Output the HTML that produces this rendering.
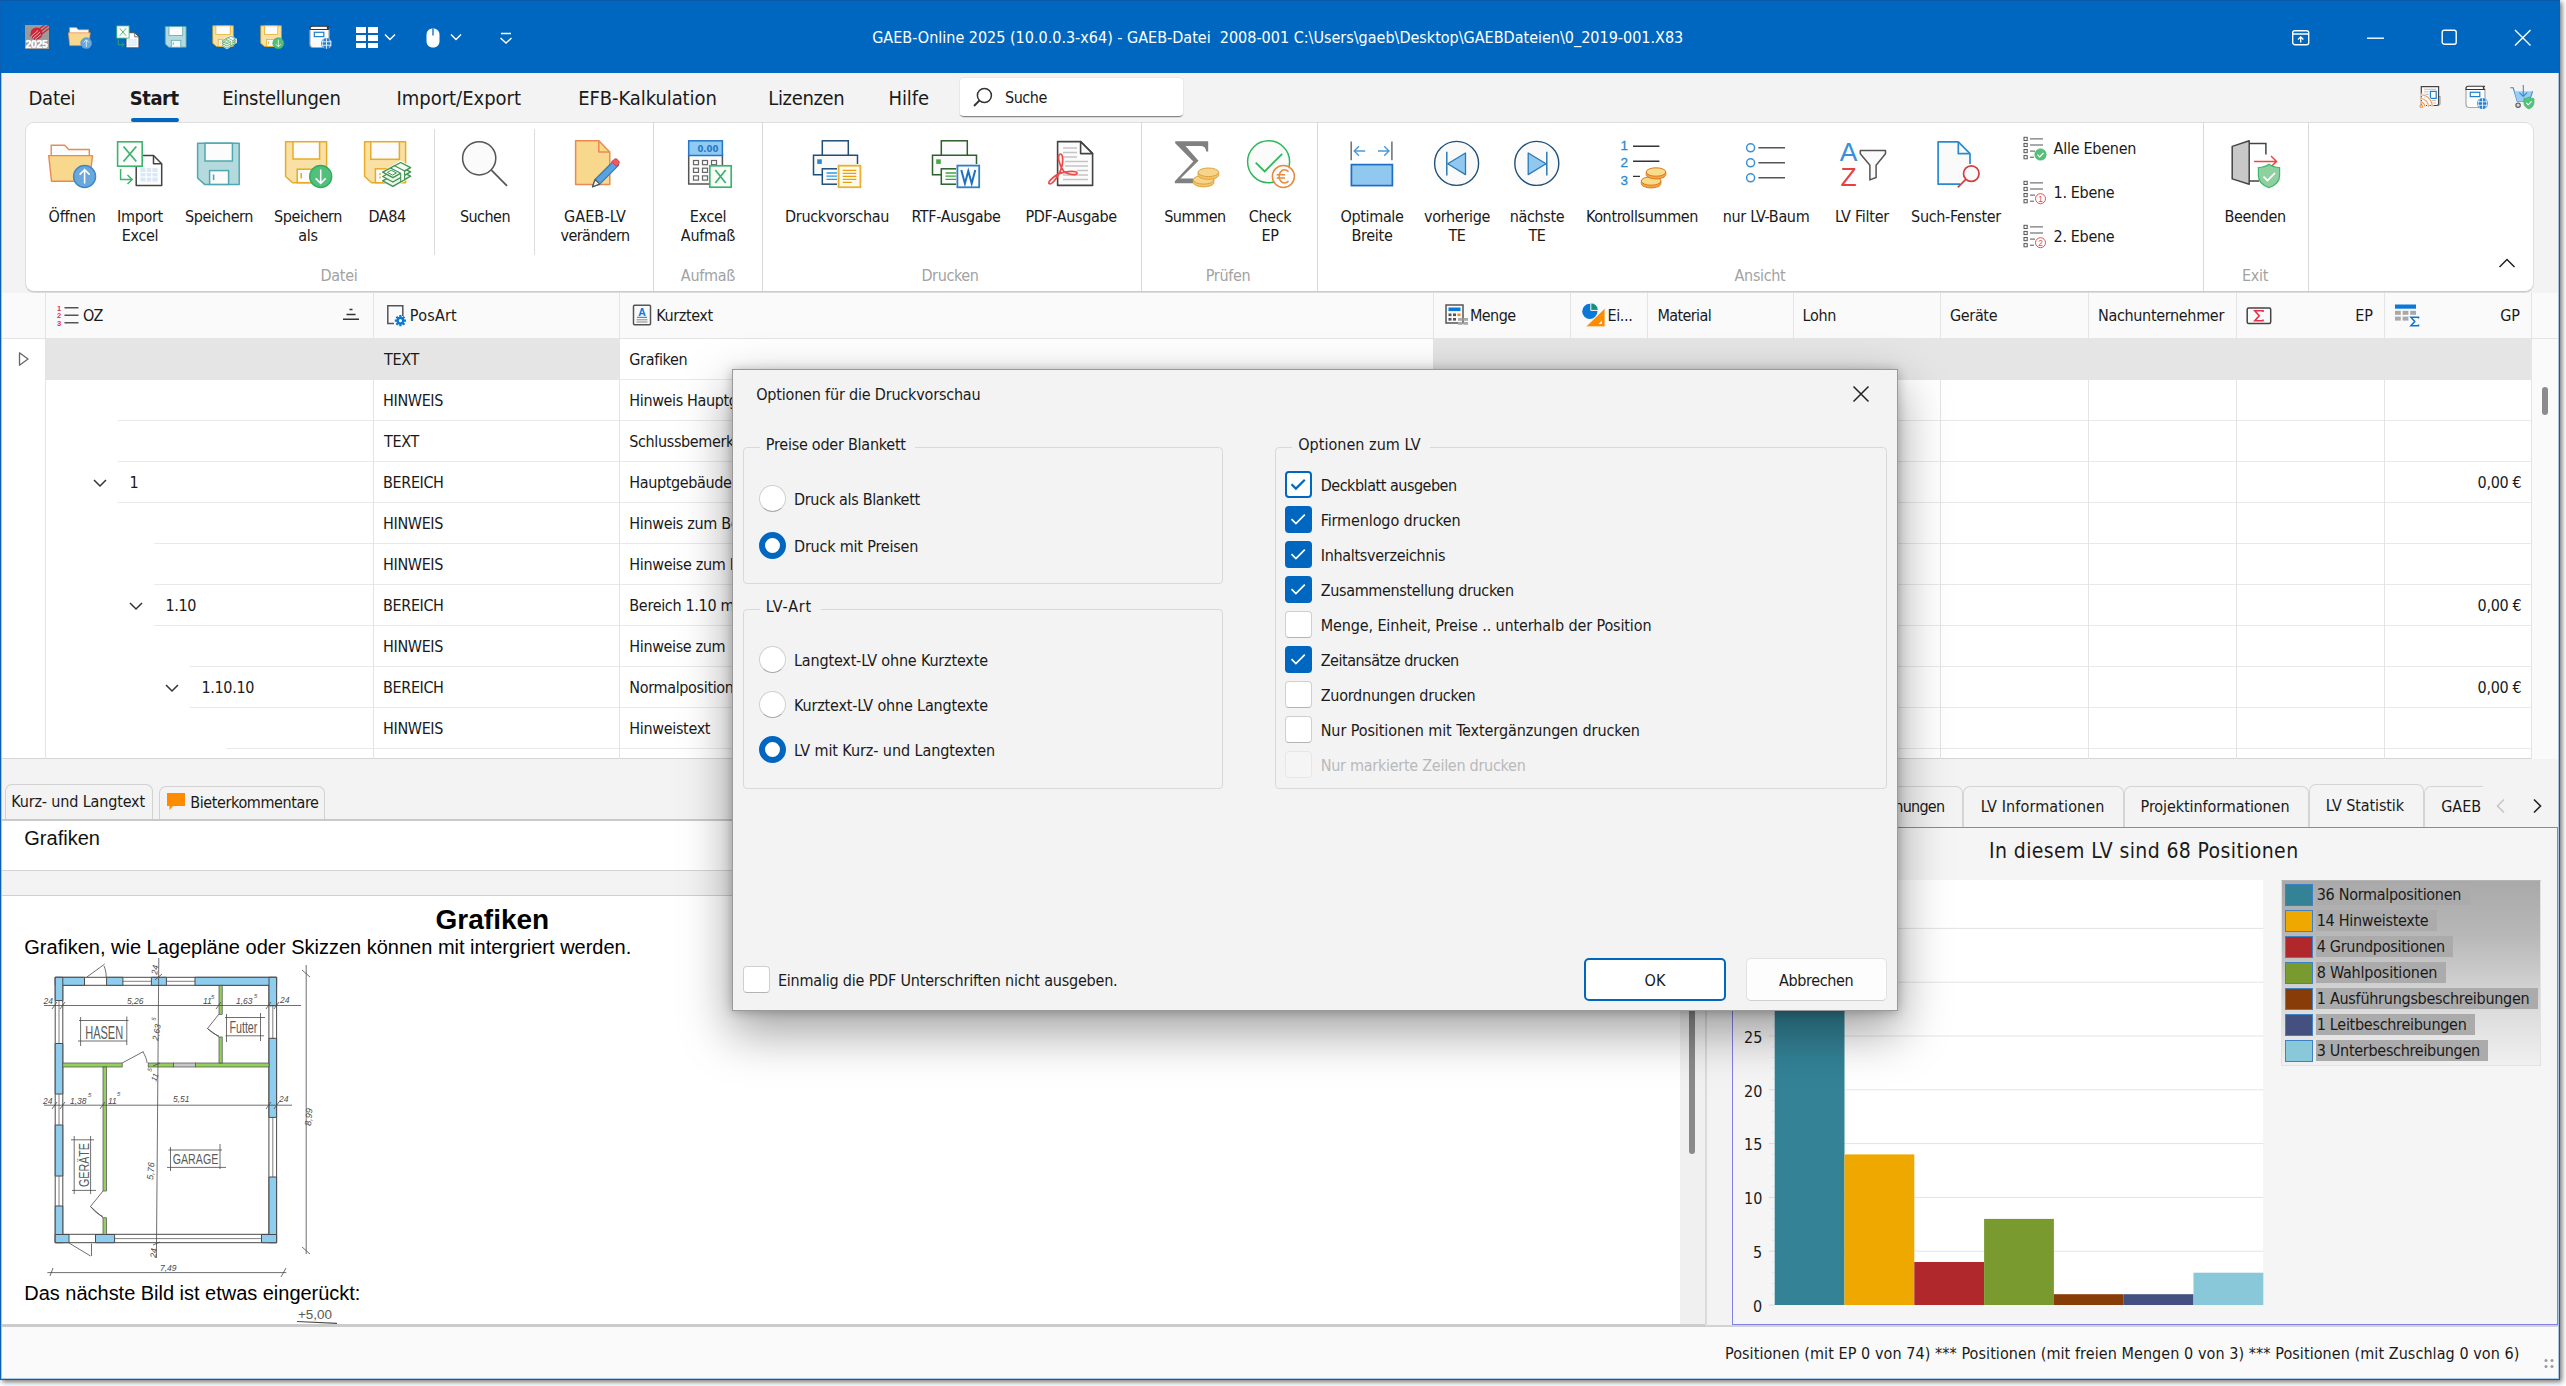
<!DOCTYPE html>
<html lang="de">
<head>
<meta charset="utf-8">
<title>GAEB-Online 2025</title>
<style>
*{box-sizing:border-box;margin:0;padding:0}
html,body{width:2566px;height:1386px;overflow:hidden;background:#fff}
body{font-family:"DejaVu Sans Condensed","Liberation Sans",sans-serif;color:#1a1a1a;position:relative}
.abs{position:absolute}
#win{position:absolute;left:0;top:0;width:2560px;height:1380px;background:#f3f3f3;box-shadow:2px 2px 5px rgba(0,0,0,.55);overflow:hidden}
#winb{position:absolute;left:0;top:0;width:2560px;height:1380px;border:1px solid #0a5fb6;border-top:none;pointer-events:none;z-index:50}
#winb i{position:absolute;left:0;top:73px;right:0;bottom:0;border:1px solid rgba(10,100,190,.32);border-top:none}
svg{display:block;overflow:visible}
.t{position:absolute;white-space:pre;line-height:1}
</style>
</head>
<body>
<div id="win">

<div id="title" class="abs" style="left:0;top:0;width:2560px;height:73px;background:#0067c0;border-top:1px solid #0a5aa8">
<div class="abs" style="left:25px;top:24px;width:24px;height:24px;background:#9a9a9a;overflow:hidden">
<svg width="24" height="24" viewBox="0 0 24 24"><circle cx="11.5" cy="8.5" r="6" fill="#c8283a"/><path d="M7 13L24 0M9 15L24 3.5M5 11L22 -2" stroke="#c8283a" stroke-width="1.3"/><path d="M6 11.5l7-6M8 13l7-6M10 14.5l6-5" stroke="#f0d0d0" stroke-width=".8"/></svg>
<span class="t" style="left:.5px;top:14px;font-family:'Liberation Sans',sans-serif;font-weight:bold;font-size:10.500px;color:#fff;letter-spacing:-.35px;text-shadow:0 0 1px #fff">2025</span></div>
<div class="abs" style="left:68px;top:24px"><svg width="24" height="24" viewBox="0 0 48 48"><path d="M3.2 16V5.2h13.5l4 4.3h20.6V16" fill="#fdfdfd" stroke="#ea8a52" stroke-width="1.4" stroke-linejoin="round"/>
<path d="M0.7 15.6h43.8l-3 25.6H3.5z" fill="#f8d88c" stroke="#ea8a52" stroke-width="1.4" stroke-linejoin="round"/>
<circle cx="36.6" cy="36.5" r="11" fill="#6aa8dc" stroke="#3d88cc" stroke-width="1.4"/>
<path d="M36.6 43.5V30M31.6 34.6l5-5 5 5" fill="none" stroke="#fff" stroke-width="1.5"/></svg></div>
<div class="abs" style="left:116px;top:24px"><svg width="24" height="24" viewBox="0 0 48 48"><path d="M20.2 15.5h17.3l8.2 8.3v21.7H20.2z" fill="#fdfdfd" stroke="#444" stroke-width="1.5" stroke-linejoin="round"/>
<path d="M37.5 15.5v8.3h8.2" fill="none" stroke="#444" stroke-width="1.5" stroke-linejoin="round"/>
<rect x="24.5" y="28" width="17" height="13.5" fill="#d8e8f8"/>
<path d="M24.5 32.5h17M24.5 37h17M30.2 28v13.5M35.8 28v13.5" stroke="#fff" stroke-width="1.2"/>
<rect x="1.6" y="1.8" width="24.6" height="24.4" fill="#fdfdfd" stroke="#3bb56c" stroke-width="1.6"/>
<path d="M7.5 6.5l12.8 15M20.3 6.5l-12.8 15" stroke="#3bb56c" stroke-width="1.8" fill="none"/>
<path d="M4.6 29v10.5h11M11.5 35l4.6 4.5-4.6 4.5" fill="none" stroke="#3bb56c" stroke-width="1.5"/></svg></div>
<div class="abs" style="left:164px;top:24px"><svg width="24" height="24" viewBox="0 0 48 48"><path d="M2.6 3.2h41.6v41.2H9.6L2.6 38z" fill="#b4dade" stroke="#4fa8b0" stroke-width="1.5" stroke-linejoin="round"/>
<rect x="10" y="3.2" width="27.4" height="17.8" fill="#fcfcfc" stroke="#4fa8b0" stroke-width="1.5"/>
<rect x="14.6" y="30.6" width="19" height="13.8" fill="#fcfcfc" stroke="#4fa8b0" stroke-width="1.5"/>
<path d="M18.6 34.5v5.6" stroke="#4fa8b0" stroke-width="1.6"/></svg></div>
<div class="abs" style="left:212px;top:24px"><svg width="24" height="24" viewBox="0 0 48 48"><path d="M1.6 1.7h41v41H8.6L1.6 36.5z" fill="#f9e0a4" stroke="#e9ab24" stroke-width="1.5" stroke-linejoin="round"/>
<rect x="7.8" y="1.7" width="28.6" height="17.6" fill="#fcfcfc" stroke="#e9ab24" stroke-width="1.5"/>
<rect x="12.4" y="28.8" width="18.6" height="13.9" fill="#fcfcfc" stroke="#e9ab24" stroke-width="1.5"/>
<path d="M17.2 33v5.6" stroke="#e9ab24" stroke-width="1.6" stroke-dasharray="2 1.5"/>
<polygon points="17.7,32.2 37.7,20.5 49.6,27.6 49.6,36.2 29.9,48.3 17.7,40.8" fill="#fdfdfd"/>
<g stroke="#3f9350" stroke-width="1.4" stroke-linejoin="round">
<polygon points="19.7,40.8 37.7,31.1 47.6,36.2 29.9,46.3" fill="#eef7ec"/>
<polygon points="19.7,36.5 37.7,26.8 47.6,31.9 29.9,42" fill="#eef7ec"/>
<polygon points="19.7,32.2 37.7,22.5 47.6,27.6 29.9,37.7" fill="#f4faf2"/>
<polygon points="27.6,27.9 31.6,25.8 41.6,31 41.6,39.6 37.7,41.9 37.7,33.3" fill="#fdfdfd" stroke-width="1.1"/>
<polygon points="24.4,32.4 28.3,30.2 33.4,32.9 29.5,35.1" fill="none" stroke-width="1"/>
</g></svg></div>
<div class="abs" style="left:260px;top:24px"><svg width="24" height="24" viewBox="0 0 48 48"><path d="M1.6 1.7h41v41H8.6L1.6 36.5z" fill="#f9e0a4" stroke="#e9ab24" stroke-width="1.5" stroke-linejoin="round"/>
<rect x="9" y="1.7" width="26.6" height="17.3" fill="#fcfcfc" stroke="#e9ab24" stroke-width="1.5"/>
<rect x="13.2" y="29.2" width="18" height="13.5" fill="#fcfcfc" stroke="#e9ab24" stroke-width="1.5"/>
<path d="M17.2 33v5.6" stroke="#e9ab24" stroke-width="1.6"/>
<circle cx="36.7" cy="36.5" r="11" fill="#52c07c" stroke="#2fae62" stroke-width="1.4"/>
<path d="M36.7 29.5V43M31.7 38.4l5 5 5-5" fill="none" stroke="#fff" stroke-width="1.5"/></svg></div>
<div class="abs" style="left:308px;top:24px"><svg width="24" height="24" viewBox="0 0 48 48"><path d="M4 9h38v30a6 6 0 0 1-6 6H10a6 6 0 0 1-6-6z" fill="#fcfcfc" stroke="#a8a8a8" stroke-width="2.4"/>
<path d="M4 9V6.5a4 4 0 0 1 4-4h33l-2.5 3.2L41 9z" fill="#fcfcfc" stroke="#333" stroke-width="2.4" stroke-linejoin="round"/>
<rect x="12.6" y="14.6" width="19" height="8.6" fill="#fcfcfc" stroke="#1f7fd0" stroke-width="2.4"/>
<circle cx="37" cy="37" r="11" fill="#2a80d0"/>
<path d="M37 26.5v21M31 29c-3.5 5-3.5 11 0 16M43 29c3.5 5 3.5 11 0 16M27 33.5h20M27 40.5h20" fill="none" stroke="#e8f2fc" stroke-width="1.8"/></svg></div>
<svg class="abs" style="left:355px;top:25px" width="24" height="24" viewBox="0 0 24 24"><g fill="#fff"><rect x="1" y="1" width="10" height="6"/><rect x="13" y="1" width="10" height="6"/><rect x="1" y="9" width="10" height="6"/><rect x="13" y="9" width="10" height="6"/><rect x="1" y="17" width="10" height="5"/><rect x="13" y="17" width="10" height="5"/></g></svg>
<svg class="abs" style="left:384px;top:32px" width="12" height="8" viewBox="0 0 12 8"><path d="M1 1.5l5 5 5-5" fill="none" stroke="#fff" stroke-width="1.4"/></svg>
<svg class="abs" style="left:424px;top:26px" width="18" height="22" viewBox="0 0 18 22"><path d="M9 1.5c-4 0-6.5 2.5-6.5 6.5v6c0 4 2.5 6.5 6.5 6.5s6.5-2.5 6.5-6.5V8c0-4-2.5-6.5-6.5-6.5z" fill="#fff"/><path d="M9 1.5v7" stroke="#0067c0" stroke-width="1.3"/></svg>
<svg class="abs" style="left:450px;top:32px" width="12" height="8" viewBox="0 0 12 8"><path d="M1 1.5l5 5 5-5" fill="none" stroke="#fff" stroke-width="1.4"/></svg>
<svg class="abs" style="left:499px;top:30px" width="14" height="14" viewBox="0 0 14 14"><path d="M2 2.5h10M1.5 7l5.5 5 5.5-5" fill="none" stroke="#fff" stroke-width="1.4"/></svg>
<span class="t" style="left:872.2px;top:29px;font-size:16px;color:#fff;">GAEB-Online 2025 (10.0.0.3-x64) - GAEB-Datei  2008-001 C:\Users\gaeb\Desktop\GAEBDateien\0_2019-001.X83</span>
<svg class="abs" style="left:2291px;top:28px" width="20" height="18" viewBox="0 0 20 18"><rect x="1.7" y="1.7" width="16" height="14" rx="2" fill="none" stroke="#fff" stroke-width="1.4"/><path d="M1.7 5h16M9.7 13.5V8M7 10.5l2.7-2.7 2.7 2.7" fill="none" stroke="#fff" stroke-width="1.3"/></svg>
<svg class="abs" style="left:2367px;top:36px" width="17" height="3" viewBox="0 0 17 3"><path d="M0 1.2h17" stroke="#fff" stroke-width="1.4"/></svg>
<svg class="abs" style="left:2441px;top:28px" width="17" height="17" viewBox="0 0 17 17"><rect x="1.2" y="1.2" width="14" height="14" rx="2" fill="none" stroke="#fff" stroke-width="1.4"/></svg>
<svg class="abs" style="left:2514px;top:28px" width="18" height="18" viewBox="0 0 18 18"><path d="M1 1l15.5 15.5M16.5 1L1 16.5" stroke="#fff" stroke-width="1.4"/></svg>
</div>

<div id="tabs" class="abs" style="left:0;top:73px;width:2560px;height:49px;background:#f3f3f3"></div>
<div class="abs" style="left:131px;top:118px;width:48px;height:4px;border-radius:2px;background:#0067c0"></div>
<div class="abs" style="left:959px;top:77px;width:225px;height:40px;border-radius:5px;background:#fff;border:1px solid #e8e8e8;border-bottom:1px solid #868686;box-shadow:0 1px 0 rgba(0,0,0,.10)"></div>
<svg class="abs" style="left:972px;top:86px" width="22" height="22" viewBox="0 0 22 22"><circle cx="12.4" cy="9.5" r="7" fill="none" stroke="#333" stroke-width="1.5"/><path d="M7.4 14.5L2 20" stroke="#333" stroke-width="1.8"/></svg>
<span class="t" style="left:28.5px;top:88px;font-size:20px;letter-spacing:-0.24px;">Datei</span>
<span class="t" style="left:129.8px;top:88px;font-size:20px;letter-spacing:-0.46px;font-weight:700;">Start</span>
<span class="t" style="left:222.2px;top:88px;font-size:20px;letter-spacing:-0.28px;">Einstellungen</span>
<span class="t" style="left:396.4px;top:88px;font-size:20px;">Import/Export</span>
<span class="t" style="left:578.2px;top:88px;font-size:20px;letter-spacing:-0.08px;">EFB-Kalkulation</span>
<span class="t" style="left:768.3px;top:88px;font-size:20px;letter-spacing:-0.35px;">Lizenzen</span>
<span class="t" style="left:888.6px;top:88px;font-size:20px;letter-spacing:-0.13px;">Hilfe</span>
<span class="t" style="left:1005.0px;top:90px;font-size:16px;letter-spacing:-0.47px;">Suche</span>
<div class="abs" style="left:2418px;top:85px"><svg width="24" height="24" viewBox="0 0 24 24"><path d="M18.5 11.5h3.5v7.2a1.6 1.6 0 0 1-3.2 0" fill="#fcfcfc" stroke="#9a9a9a" stroke-width="1.1"/>
<path d="M3.3 20V1.6h17.3V18.8a1.7 1.7 0 0 1-1.7 1.7H8" fill="#fcfcfc" stroke="#444" stroke-width="1.2"/>
<path d="M6 4.2h12M6 6.8h4.5M6 9.4h4.5M6 12h4.5M13 15.5h5M13 18h5" stroke="#c0c0c0" stroke-width="1.1"/>
<rect x="12.4" y="6.4" width="5.8" height="7" fill="#fcfcfc" stroke="#1f7fd0" stroke-width="1.2"/>
<g fill="none" stroke="#f5f5f5" stroke-width="2.6"><path d="M2.5 9.8a11.7 11.7 0 0 1 11.7 11.7M2.5 13.5a8 8 0 0 1 8 8M2.5 17.2a4.3 4.3 0 0 1 4.3 4.3"/></g>
<g fill="none" stroke="#f09a50" stroke-width="1.1"><path d="M2.5 9.8a11.7 11.7 0 0 1 11.7 11.7M2.5 13.5a8 8 0 0 1 8 8M2.5 17.2a4.3 4.3 0 0 1 4.3 4.3"/><circle cx="3.3" cy="21.2" r="1.3"/></g></svg></div>
<div class="abs" style="left:2464px;top:85px"><svg width="24" height="24" viewBox="0 0 48 48"><path d="M4 9h38v30a6 6 0 0 1-6 6H10a6 6 0 0 1-6-6z" fill="#fcfcfc" stroke="#a8a8a8" stroke-width="2.4"/>
<path d="M4 9V6.5a4 4 0 0 1 4-4h33l-2.5 3.2L41 9z" fill="#fcfcfc" stroke="#333" stroke-width="2.4" stroke-linejoin="round"/>
<rect x="12.6" y="14.6" width="19" height="8.6" fill="#fcfcfc" stroke="#1f7fd0" stroke-width="2.4"/>
<circle cx="37" cy="37" r="11" fill="#2a80d0"/>
<path d="M37 26.5v21M31 29c-3.5 5-3.5 11 0 16M43 29c3.5 5 3.5 11 0 16M27 33.5h20M27 40.5h20" fill="none" stroke="#e8f2fc" stroke-width="1.8"/></svg></div>
<div class="abs" style="left:2510px;top:85px"><svg width="24" height="24" viewBox="0 0 24 24"><path d="M0.3 2.8h2.9L7.2 16.2h12.5" fill="none" stroke="#3a88d4" stroke-width="1.1"/>
<path d="M4.4 6.3h18.2l-3.3 10H7.3z" fill="#9acdf2"/>
<path d="M22.6 6.3l-3.3 10" stroke="#3a88d4" stroke-width="1.1" fill="none"/>
<path d="M13.3 0v11.3M9.4 7.6l3.9 3.9 3.9-3.9" fill="none" stroke="#3a88d4" stroke-width="1.1"/>
<circle cx="8.1" cy="20.2" r="2.2" fill="#d8d8d8" stroke="#555" stroke-width="1.1"/>
<path d="M18.9 12c-1.4 1-3.1 1.5-5 1.5v4c0 3.2 2 5.2 5 6.4 3-1.2 5-3.2 5-6.4v-4c-1.9 0-3.6-.5-5-1.5z" fill="#52c47a" stroke="#34b062" stroke-width=".7"/>
<path d="M16.3 17.9l1.9 1.9 3.4-3.4" fill="none" stroke="#fff" stroke-width="1.1"/></svg></div>

<div id="ribbon" class="abs" style="left:25px;top:122px;width:2509px;height:170px;background:#fff;border:1px solid #dedede;border-bottom:1px solid #cbcbcb;border-radius:9px;box-shadow:0 1px 0 #dcdcdc"></div>
<div class="abs" style="left:48px;top:140px"><svg width="48" height="48" viewBox="0 0 48 48"><path d="M3.2 16V5.2h13.5l4 4.3h20.6V16" fill="#fdfdfd" stroke="#ea8a52" stroke-width="1.4" stroke-linejoin="round"/>
<path d="M0.7 15.6h43.8l-3 25.6H3.5z" fill="#f8d88c" stroke="#ea8a52" stroke-width="1.4" stroke-linejoin="round"/>
<circle cx="36.6" cy="36.5" r="11" fill="#6aa8dc" stroke="#3d88cc" stroke-width="1.4"/>
<path d="M36.6 43.5V30M31.6 34.6l5-5 5 5" fill="none" stroke="#fff" stroke-width="1.5"/></svg></div>
<div class="abs" style="left:116px;top:140px"><svg width="48" height="48" viewBox="0 0 48 48"><path d="M20.2 15.5h17.3l8.2 8.3v21.7H20.2z" fill="#fdfdfd" stroke="#444" stroke-width="1.5" stroke-linejoin="round"/>
<path d="M37.5 15.5v8.3h8.2" fill="none" stroke="#444" stroke-width="1.5" stroke-linejoin="round"/>
<rect x="24.5" y="28" width="17" height="13.5" fill="#d8e8f8"/>
<path d="M24.5 32.5h17M24.5 37h17M30.2 28v13.5M35.8 28v13.5" stroke="#fff" stroke-width="1.2"/>
<rect x="1.6" y="1.8" width="24.6" height="24.4" fill="#fdfdfd" stroke="#3bb56c" stroke-width="1.6"/>
<path d="M7.5 6.5l12.8 15M20.3 6.5l-12.8 15" stroke="#3bb56c" stroke-width="1.8" fill="none"/>
<path d="M4.6 29v10.5h11M11.5 35l4.6 4.5-4.6 4.5" fill="none" stroke="#3bb56c" stroke-width="1.5"/></svg></div>
<div class="abs" style="left:195px;top:140px"><svg width="48" height="48" viewBox="0 0 48 48"><path d="M2.6 3.2h41.6v41.2H9.6L2.6 38z" fill="#b4dade" stroke="#4fa8b0" stroke-width="1.5" stroke-linejoin="round"/>
<rect x="10" y="3.2" width="27.4" height="17.8" fill="#fcfcfc" stroke="#4fa8b0" stroke-width="1.5"/>
<rect x="14.6" y="30.6" width="19" height="13.8" fill="#fcfcfc" stroke="#4fa8b0" stroke-width="1.5"/>
<path d="M18.6 34.5v5.6" stroke="#4fa8b0" stroke-width="1.6"/></svg></div>
<div class="abs" style="left:284px;top:140px"><svg width="48" height="48" viewBox="0 0 48 48"><path d="M1.6 1.7h41v41H8.6L1.6 36.5z" fill="#f9e0a4" stroke="#e9ab24" stroke-width="1.5" stroke-linejoin="round"/>
<rect x="9" y="1.7" width="26.6" height="17.3" fill="#fcfcfc" stroke="#e9ab24" stroke-width="1.5"/>
<rect x="13.2" y="29.2" width="18" height="13.5" fill="#fcfcfc" stroke="#e9ab24" stroke-width="1.5"/>
<path d="M17.2 33v5.6" stroke="#e9ab24" stroke-width="1.6"/>
<circle cx="36.7" cy="36.5" r="11" fill="#52c07c" stroke="#2fae62" stroke-width="1.4"/>
<path d="M36.7 29.5V43M31.7 38.4l5 5 5-5" fill="none" stroke="#fff" stroke-width="1.5"/></svg></div>
<div class="abs" style="left:363px;top:140px"><svg width="48" height="48" viewBox="0 0 48 48"><path d="M1.6 1.7h41v41H8.6L1.6 36.5z" fill="#f9e0a4" stroke="#e9ab24" stroke-width="1.5" stroke-linejoin="round"/>
<rect x="7.8" y="1.7" width="28.6" height="17.6" fill="#fcfcfc" stroke="#e9ab24" stroke-width="1.5"/>
<rect x="12.4" y="28.8" width="18.6" height="13.9" fill="#fcfcfc" stroke="#e9ab24" stroke-width="1.5"/>
<path d="M17.2 33v5.6" stroke="#e9ab24" stroke-width="1.6" stroke-dasharray="2 1.5"/>
<polygon points="17.7,32.2 37.7,20.5 49.6,27.6 49.6,36.2 29.9,48.3 17.7,40.8" fill="#fdfdfd"/>
<g stroke="#3f9350" stroke-width="1.4" stroke-linejoin="round">
<polygon points="19.7,40.8 37.7,31.1 47.6,36.2 29.9,46.3" fill="#eef7ec"/>
<polygon points="19.7,36.5 37.7,26.8 47.6,31.9 29.9,42" fill="#eef7ec"/>
<polygon points="19.7,32.2 37.7,22.5 47.6,27.6 29.9,37.7" fill="#f4faf2"/>
<polygon points="27.6,27.9 31.6,25.8 41.6,31 41.6,39.6 37.7,41.9 37.7,33.3" fill="#fdfdfd" stroke-width="1.1"/>
<polygon points="24.4,32.4 28.3,30.2 33.4,32.9 29.5,35.1" fill="none" stroke-width="1"/>
</g></svg></div>
<div class="abs" style="left:461px;top:140px"><svg width="48" height="48" viewBox="0 0 48 48"><circle cx="18.2" cy="18.3" r="16.6" fill="#fbfbfb" stroke="#555" stroke-width="1.5"/>
<path d="M30.4 30.2L46 45.8" stroke="#555" stroke-width="1.7"/></svg></div>
<div class="abs" style="left:571px;top:140px"><svg width="48" height="48" viewBox="0 0 48 48"><path d="M4.6 0.8h23.2l11 11.2v32.4H4.6z" fill="#f8d88c" stroke="#ea8a52" stroke-width="1.5" stroke-linejoin="round"/>
<path d="M27.8 0.8v11.2h11" fill="none" stroke="#ea8a52" stroke-width="1.5" stroke-linejoin="round"/>
<path d="M21.5 46.8l2.6-7.3 19-19 4.6 4.6-19 19z" fill="#5aa2e0" stroke="#2f7cc4" stroke-width="1.3" stroke-linejoin="round"/>
<path d="M43.1 20.5l2.1-2.1c1-1 2.6-1 3.5 0l1.1 1.1c1 1 1 2.5 0 3.5l-2.1 2.1z" fill="#ee5a64" stroke="#d43c48" stroke-width="1" transform="translate(-2.3 1.2)"/>
<path d="M21.5 46.8l2.6-7.3 4.6 4.6z" fill="#f4f4f4" stroke="#555" stroke-width="1.2" stroke-linejoin="round"/></svg></div>
<div class="abs" style="left:684px;top:140px"><svg width="48" height="48" viewBox="0 0 48 48"><rect x="4.7" y="14.5" width="33.7" height="29.5" fill="#fcfcfc" stroke="#555" stroke-width="1.5"/>
<rect x="4.7" y="0.8" width="33.7" height="14.7" fill="#8ecaf2" stroke="#2676c6" stroke-width="1.5"/>
<text x="34.5" y="11.8" text-anchor="end" font-family="'DejaVu Sans Condensed','Liberation Sans',sans-serif" font-weight="bold" font-size="9.5" fill="#2676c6">0.00</text>
<g fill="none" stroke="#666" stroke-width="1.2">
<rect x="9.5" y="20.5" width="5" height="4.2"/><rect x="18.5" y="20.5" width="5" height="4.2"/><rect x="27.5" y="20.5" width="5" height="4.2"/>
<rect x="9.5" y="28.2" width="5" height="4.2"/><rect x="18.5" y="28.2" width="5" height="4.2"/>
<rect x="9.5" y="35.9" width="5" height="4.2"/><rect x="18.5" y="35.9" width="5" height="4.2"/>
</g>
<rect x="25.8" y="25.8" width="21.4" height="21.4" fill="#fcfcfc" stroke="#3bb56c" stroke-width="1.7"/>
<path d="M31.3 30l10.4 13M41.7 30l-10.4 13" stroke="#3bb56c" stroke-width="1.8" fill="none"/></svg></div>
<div class="abs" style="left:813px;top:140px"><svg width="48" height="48" viewBox="0 0 48 48"><rect x="9.3" y="0.8" width="26" height="15" fill="#fcfcfc" stroke="#1f4e79" stroke-width="1.5"/>
<path d="M0.5 15.3h44v19.5H0.5z" fill="#fafafa" stroke="#1f4e79" stroke-width="1.5"/>
<rect x="4.2" y="19.3" width="4.6" height="4.6" fill="#2f86d0"/>
<rect x="9.3" y="28.8" width="20" height="15.4" fill="#fcfcfc" stroke="#1f4e79" stroke-width="1.5"/>
<path d="M13.5 33h11M13.5 36.2h11M13.5 39.4h11" stroke="#2f9ae0" stroke-width="1.3"/>
<rect x="24" y="24" width="24" height="24" fill="#fafafa"/>
<rect x="25.6" y="25.7" width="21.8" height="21.5" fill="#fffaea" stroke="#ebb030" stroke-width="1.8"/>
<path d="M29.7 30.3h13.6M29.7 33.3h13.6M29.7 36.3h13.6M29.7 39.3h13.6M29.7 42.3h9" stroke="#e8a010" stroke-width="1.3"/></svg></div>
<div class="abs" style="left:932px;top:140px"><svg width="48" height="48" viewBox="0 0 48 48"><rect x="9.3" y="0.8" width="26" height="15" fill="#fcfcfc" stroke="#2d5f2d" stroke-width="1.5"/>
<path d="M0.5 15.3h44v19.5H0.5z" fill="#fafafa" stroke="#2d5f2d" stroke-width="1.5"/>
<rect x="4.2" y="19.3" width="4.6" height="4.6" fill="#4aa84a"/>
<rect x="9.3" y="28.8" width="20" height="15.4" fill="#fcfcfc" stroke="#2d5f2d" stroke-width="1.5"/>
<path d="M13.5 33h11M13.5 36.2h11M13.5 39.4h11" stroke="#3aa83a" stroke-width="1.3"/>
<rect x="24" y="24" width="24" height="24" fill="#fafafa"/>
<rect x="25.4" y="25.6" width="21.8" height="21.7" fill="#fcfcfc" stroke="#2f7ec8" stroke-width="1.8"/>
<path d="M29.3 30l3.6 13.5L36.3 31l3.4 12.5L43.3 30" fill="none" stroke="#1f6fc0" stroke-width="2" stroke-linejoin="miter"/></svg></div>
<div class="abs" style="left:1047px;top:140px"><svg width="48" height="48" viewBox="0 0 48 48"><path d="M10.6 1.6h23l12 12v31.8H10.6z" fill="#fcfcfc" stroke="#444" stroke-width="1.6" stroke-linejoin="round"/>
<path d="M33.6 1.6v12h12z" fill="#fcfcfc" stroke="#444" stroke-width="1.6" stroke-linejoin="round"/>
<path d="M16 8h14M16 12.5h14M16 17h14M18 21.5h23M18 26h23M30 30.5h11M16 35h25M16 39.5h25" stroke="#c4c4c4" stroke-width="1.4"/>
<path d="M13.6 14c-1.8 0-2.6 2.6-1.8 6.4 .8 3.8 2.6 8 5.6 11.8 -3.6 .6-9.4 3.2-13.6 7.4 -2 2-2.6 3.8-1.4 4.2 1.6 .6 4.2-1.6 7.2-6 2.6-4 5.6-10.4 6-15.2 .4-5.4-.4-8.6-2-8.6z M17.4 32.2c4.6-.9 8.8-1.2 11.4-.4 1.8 .6 1.8 2.2-.2 2.6 -2.6 .5-7-.2-11.2-2.2z" fill="none" stroke="#ee4a4a" stroke-width="1.7" stroke-linejoin="round"/></svg></div>
<div class="abs" style="left:1171px;top:140px"><svg width="48" height="48" viewBox="0 0 48 48"><path d="M4.2 1.3H37.2V11.5H35.2C34.8 7.5 33 6 29 6H14.5L27.5 20.8 9.5 38.5H22V43.2H3.8V41.3L22.3 21.5 4.2 3.2z" fill="#808080"/>
<g stroke="#e2a23a" stroke-width="1">
<path d="M22.3 39.8v2.6c0 2.5 4.6 4.4 10.3 4.4s10.3-1.9 10.3-4.4v-2.6z" fill="#f2c46a"/>
<ellipse cx="32.6" cy="39.8" rx="10.3" ry="4.3" fill="#f6d48a"/>
<path d="M27.1 32.3v2.6c0 2.5 4.6 4.4 10.3 4.4s10.3-1.9 10.3-4.4v-2.6z" fill="#f2c46a"/>
<ellipse cx="37.4" cy="32.3" rx="10.3" ry="4.3" fill="#f6d48a"/>
</g></svg></div>
<div class="abs" style="left:1246px;top:140px"><svg width="48" height="48" viewBox="0 0 48 48"><circle cx="22.6" cy="21.8" r="21" fill="#fbfbfb" stroke="#2eb85c" stroke-width="1.5"/>
<path d="M9.7 22.7l9 8.7 17.5-17.5" fill="none" stroke="#2eb85c" stroke-width="1.8"/>
<circle cx="37.4" cy="36.4" r="11" fill="#fdfdfd" stroke="#e88a3c" stroke-width="1.5"/>
<path d="M42.5 31.8c-1.1-1.3-2.5-2-4.1-2-3 0-5.3 2.9-5.3 6.6s2.3 6.6 5.3 6.6c1.6 0 3-.7 4.1-2M30.6 34.8h8.4M30.6 38h8.4" fill="none" stroke="#e88a3c" stroke-width="1.5"/></svg></div>
<div class="abs" style="left:1348px;top:140px"><svg width="48" height="48" viewBox="0 0 48 48"><path d="M3.2 1.5v18.8M43.9 1.5v18.8" stroke="#777" stroke-width="1.6"/>
<path d="M6.2 11h11M11 6.2L6.2 11l4.8 4.8M41 11H30M36.2 6.2L41 11l-4.8 4.8" fill="none" stroke="#4a9ad8" stroke-width="1.4"/>
<rect x="3.4" y="24.6" width="41" height="21" fill="#90c8f0" stroke="#1f6fc0" stroke-width="1.7"/></svg></div>
<div class="abs" style="left:1433px;top:140px"><svg width="48" height="48" viewBox="0 0 48 48"><circle cx="23.6" cy="23.4" r="22" fill="#fafafa" stroke="#1f5078" stroke-width="1.4"/>
<path d="M32.5 13v21.6L14.7 23.8z" fill="#90c8f0" stroke="#2a7ab8" stroke-width="1.3" stroke-linejoin="round"/>
<path d="M13.8 11.8v23.7" stroke="#2a7ab8" stroke-width="1.5"/></svg></div>
<div class="abs" style="left:1513px;top:140px"><svg width="48" height="48" viewBox="0 0 48 48"><circle cx="23.8" cy="23.4" r="22" fill="#fafafa" stroke="#1f5078" stroke-width="1.4"/>
<path d="M15.2 13v21.6L33 23.8z" fill="#90c8f0" stroke="#2a7ab8" stroke-width="1.3" stroke-linejoin="round"/>
<path d="M33.8 11.8v23.7" stroke="#2a7ab8" stroke-width="1.5"/></svg></div>
<div class="abs" style="left:1618px;top:140px"><svg width="48" height="48" viewBox="0 0 48 48"><g font-family="'Liberation Sans',sans-serif" font-size="13.5" fill="#2a8ad0" text-anchor="middle" stroke="#2a8ad0" stroke-width=".3">
<text x="6.2" y="10">1</text><text x="6.2" y="26.5">2</text><text x="6.2" y="44.7">3</text></g>
<path d="M15 6.2h26.4M15 21.2h26.4M15 36.4h7" stroke="#333" stroke-width="1.4"/>
<g stroke="#e07820" stroke-width="1">
<path d="M23.3 41v2.6c0 2.4 4.4 4.3 9.8 4.3s9.8-1.9 9.8-4.3V41z" fill="#f0a640"/>
<ellipse cx="33.1" cy="41" rx="9.8" ry="4.2" fill="#f8dc8c"/>
<path d="M28.2 32v2.6c0 2.4 4.4 4.3 9.8 4.3s9.8-1.9 9.8-4.3V32z" fill="#f0a640"/>
<ellipse cx="38" cy="32" rx="9.8" ry="4.2" fill="#f8dc8c"/>
</g></svg></div>
<div class="abs" style="left:1742px;top:140px"><svg width="48" height="48" viewBox="0 0 48 48"><g fill="none" stroke="#3a90d8" stroke-width="1.5"><circle cx="8.6" cy="7.8" r="4"/><circle cx="8.6" cy="22.8" r="4"/><circle cx="8.6" cy="37.8" r="4"/></g>
<path d="M16.4 7.8H43M16.4 22.8H43M16.4 37.8H43" stroke="#555" stroke-width="1.6"/></svg></div>
<div class="abs" style="left:1838px;top:140px"><svg width="48" height="48" viewBox="0 0 48 48"><g font-family="'Liberation Sans',sans-serif" font-size="26.5" text-anchor="middle">
<text x="10.5" y="21.4" fill="#3a90d8">A</text><text x="10.5" y="45.6" fill="#e84040">Z</text></g>
<path d="M22.3 10.6h25.2v3.2L38.1 25.2v12.3l-6.2 2.4V25.2L22.3 13.8z" fill="#fafafa" stroke="#555" stroke-width="1.5" stroke-linejoin="round"/></svg></div>
<div class="abs" style="left:1932px;top:140px"><svg width="48" height="48" viewBox="0 0 48 48"><path d="M6.1 1.9h20.2L38 13.7v30.5H6.1z" fill="#fafafa" stroke="#2a8ad0" stroke-width="1.7" stroke-linejoin="round"/>
<path d="M26.3 1.9v11.8H38" fill="none" stroke="#2a8ad0" stroke-width="1.7" stroke-linejoin="round"/>
<rect x="28" y="24" width="14" height="22" fill="#fafafa"/>
<circle cx="39.3" cy="33.6" r="7.8" fill="#fafafa" stroke="#d04040" stroke-width="1.7"/>
<path d="M33.8 39.3L25.8 47.3" stroke="#d04040" stroke-width="1.7"/></svg></div>
<div class="abs" style="left:2231px;top:140px"><svg width="48" height="48" viewBox="0 0 48 48"><path d="M18.2 3.5h16.7v11M18.2 40.9h10" fill="none" stroke="#444" stroke-width="1.5"/>
<path d="M1.2 6.4L18.2 0.7v43.6L1.2 38.9z" fill="#c8c8c8" stroke="#444" stroke-width="1.5" stroke-linejoin="round"/>
<path d="M23.1 21.4h22.5M40 16l5.6 5.4-5.6 5.4" fill="none" stroke="#ee4444" stroke-width="1.5"/>
<path d="M38 24.3c-3 2.2-6.5 3.2-10.6 3.2v8c0 6 4.4 10 10.6 12.2 6.2-2.2 10.6-6.2 10.6-12.2v-8c-4.1 0-7.6-1-10.6-3.2z" fill="#8ed0a0" stroke="#3cb868" stroke-width="1.2"/>
<path d="M32.5 36.6l4 3.9 7.5-7.5" fill="none" stroke="#fff" stroke-width="1.7"/></svg></div>
<div class="abs" style="left:434px;top:129px;width:1px;height:126px;background:#dcdcdc"></div>
<div class="abs" style="left:534px;top:129px;width:1px;height:126px;background:#dcdcdc"></div>
<div class="abs" style="left:653px;top:123px;width:1px;height:168px;background:#d8d8d8"></div>
<div class="abs" style="left:762px;top:123px;width:1px;height:168px;background:#d8d8d8"></div>
<div class="abs" style="left:1141px;top:123px;width:1px;height:168px;background:#d8d8d8"></div>
<div class="abs" style="left:1317px;top:123px;width:1px;height:168px;background:#d8d8d8"></div>
<div class="abs" style="left:2203px;top:123px;width:1px;height:168px;background:#d8d8d8"></div>
<div class="abs" style="left:2308px;top:123px;width:1px;height:168px;background:#d8d8d8"></div>
<svg class="abs" style="left:2023px;top:136px" width="24" height="24" viewBox="0 0 24 24"><g fill="#fcfcfc" stroke="#555" stroke-width="1"><rect x="1" y="1.3" width="3.2" height="3.2"/><rect x="1" y="7.4" width="3.2" height="3.2"/><rect x="1" y="13.5" width="3.2" height="3.2"/><rect x="1" y="19.6" width="3.2" height="3.2"/></g><path d="M7 2.9h13M7 9h13M7 15.1h5M7 21.2h4" stroke="#555" stroke-width="1"/><circle cx="17.5" cy="18.5" r="5.6" fill="#58c078" stroke="#3cae60" stroke-width=".8"/><path d="M14.5 18.6l2.2 2.2 3.8-3.8" fill="none" stroke="#fff" stroke-width="1.2"/></svg>
<svg class="abs" style="left:2023px;top:180px" width="24" height="24" viewBox="0 0 24 24"><g fill="#fcfcfc" stroke="#555" stroke-width="1"><rect x="1" y="1.3" width="3.2" height="3.2"/><rect x="1" y="7.4" width="3.2" height="3.2"/><rect x="1" y="13.5" width="3.2" height="3.2"/><rect x="1" y="19.6" width="3.2" height="3.2"/></g><path d="M7 2.9h13M7 9h13M7 15.1h5M7 21.2h4" stroke="#555" stroke-width="1"/><circle cx="17.5" cy="18.7" r="5" fill="#fff" stroke="#ee4a4a" stroke-width="1"/><text x="17.5" y="21.7" text-anchor="middle" font-family="'Liberation Sans',sans-serif" font-size="8.5" fill="#ee4a4a">1</text></svg>
<svg class="abs" style="left:2023px;top:224px" width="24" height="24" viewBox="0 0 24 24"><g fill="#fcfcfc" stroke="#555" stroke-width="1"><rect x="1" y="1.3" width="3.2" height="3.2"/><rect x="1" y="7.4" width="3.2" height="3.2"/><rect x="1" y="13.5" width="3.2" height="3.2"/><rect x="1" y="19.6" width="3.2" height="3.2"/></g><path d="M7 2.9h13M7 9h13M7 15.1h5M7 21.2h4" stroke="#555" stroke-width="1"/><circle cx="17.5" cy="18.7" r="5" fill="#fff" stroke="#ee4a4a" stroke-width="1"/><text x="17.5" y="21.7" text-anchor="middle" font-family="'Liberation Sans',sans-serif" font-size="8.5" fill="#ee4a4a">2</text></svg>
<svg class="abs" style="left:2498px;top:257px" width="18" height="12" viewBox="0 0 18 12"><path d="M1.5 10l7.5-7.5 7.5 7.5" fill="none" stroke="#222" stroke-width="1.5"/></svg>
<span class="t" style="left:48.6px;top:209px;font-size:16px;letter-spacing:-0.26px;">Öffnen</span>
<span class="t" style="left:117.1px;top:209px;font-size:16px;letter-spacing:-0.34px;">Import</span>
<span class="t" style="left:121.8px;top:228px;font-size:16px;letter-spacing:-0.33px;">Excel</span>
<span class="t" style="left:185.0px;top:209px;font-size:16px;letter-spacing:-0.42px;">Speichern</span>
<span class="t" style="left:274.0px;top:209px;font-size:16px;letter-spacing:-0.42px;">Speichern</span>
<span class="t" style="left:298.3px;top:228px;font-size:16px;letter-spacing:-0.29px;">als</span>
<span class="t" style="left:368.4px;top:209px;font-size:16px;letter-spacing:-0.42px;">DA84</span>
<span class="t" style="left:459.9px;top:209px;font-size:16px;letter-spacing:-0.53px;">Suchen</span>
<span class="t" style="left:563.9px;top:209px;font-size:16px;letter-spacing:0.13px;">GAEB-LV</span>
<span class="t" style="left:560.4px;top:228px;font-size:16px;letter-spacing:-0.53px;">verändern</span>
<span class="t" style="left:689.8px;top:209px;font-size:16px;letter-spacing:-0.33px;">Excel</span>
<span class="t" style="left:680.8px;top:228px;font-size:16px;letter-spacing:-0.26px;">Aufmaß</span>
<span class="t" style="left:785.0px;top:209px;font-size:16px;letter-spacing:-0.31px;">Druckvorschau</span>
<span class="t" style="left:911.4px;top:209px;font-size:16px;letter-spacing:-0.36px;">RTF-Ausgabe</span>
<span class="t" style="left:1025.4px;top:209px;font-size:16px;letter-spacing:-0.37px;">PDF-Ausgabe</span>
<span class="t" style="left:1164.2px;top:209px;font-size:16px;letter-spacing:-0.46px;">Summen</span>
<span class="t" style="left:1248.8px;top:209px;font-size:16px;letter-spacing:-0.38px;">Check</span>
<span class="t" style="left:1261.5px;top:228px;font-size:16px;letter-spacing:-0.38px;">EP</span>
<span class="t" style="left:1340.5px;top:209px;font-size:16px;letter-spacing:-0.35px;">Optimale</span>
<span class="t" style="left:1351.5px;top:228px;font-size:16px;letter-spacing:-0.31px;">Breite</span>
<span class="t" style="left:1424.1px;top:209px;font-size:16px;letter-spacing:-0.33px;">vorherige</span>
<span class="t" style="left:1448.4px;top:228px;font-size:16px;letter-spacing:-0.38px;">TE</span>
<span class="t" style="left:1509.7px;top:209px;font-size:16px;letter-spacing:-0.35px;">nächste</span>
<span class="t" style="left:1528.4px;top:228px;font-size:16px;letter-spacing:-0.38px;">TE</span>
<span class="t" style="left:1585.9px;top:209px;font-size:16px;letter-spacing:-0.36px;">Kontrollsummen</span>
<span class="t" style="left:1722.8px;top:209px;font-size:16px;letter-spacing:-0.35px;">nur LV-Baum</span>
<span class="t" style="left:1835.1px;top:209px;font-size:16px;letter-spacing:-0.27px;">LV Filter</span>
<span class="t" style="left:1911.1px;top:209px;font-size:16px;letter-spacing:-0.34px;">Such-Fenster</span>
<span class="t" style="left:2224.5px;top:209px;font-size:16px;letter-spacing:-0.39px;">Beenden</span>
<span class="t" style="left:320.6px;top:268px;font-size:16px;letter-spacing:-0.33px;color:#a2a2a2;">Datei</span>
<span class="t" style="left:680.8px;top:268px;font-size:16px;letter-spacing:-0.26px;color:#a2a2a2;">Aufmaß</span>
<span class="t" style="left:921.4px;top:268px;font-size:16px;letter-spacing:-0.37px;color:#a2a2a2;">Drucken</span>
<span class="t" style="left:1205.8px;top:268px;font-size:16px;letter-spacing:-0.33px;color:#a2a2a2;">Prüfen</span>
<span class="t" style="left:1734.6px;top:268px;font-size:16px;letter-spacing:-0.33px;color:#a2a2a2;">Ansicht</span>
<span class="t" style="left:2242.0px;top:268px;font-size:16px;letter-spacing:-0.29px;color:#a2a2a2;">Exit</span>
<span class="t" style="left:2053.6px;top:141px;font-size:16px;letter-spacing:-0.27px;">Alle Ebenen</span>
<span class="t" style="left:2053.6px;top:185px;font-size:16px;letter-spacing:-0.34px;">1. Ebene</span>
<span class="t" style="left:2053.6px;top:229px;font-size:16px;letter-spacing:-0.34px;">2. Ebene</span>

<div id="grid" class="abs" style="left:2px;top:293px;width:2556px;height:466px;background:#fff;border-bottom:1px solid #d6d6d6;overflow:hidden"></div>
<div class="abs" style="left:2px;top:293px;width:2556px;height:46px;background:#fafafa;border-bottom:1px solid #e4e4e4"></div>
<div class="abs" style="left:2532px;top:339px;width:26px;height:420px;background:#fafafa"></div>
<div class="abs" style="left:46px;top:338px;width:574px;height:42px;background:#e5e5e5"></div>
<div class="abs" style="left:1433px;top:338px;width:1099px;height:42px;background:#e5e5e5"></div>
<div class="abs" style="left:620px;top:379.1px;width:813px;height:1px;background:#e9e9e9"></div>
<div class="abs" style="left:118px;top:420.1px;width:2414px;height:1px;background:#e9e9e9"></div>
<div class="abs" style="left:118px;top:461.1px;width:2414px;height:1px;background:#e9e9e9"></div>
<div class="abs" style="left:118px;top:502.1px;width:2414px;height:1px;background:#e9e9e9"></div>
<div class="abs" style="left:154px;top:543.1px;width:2378px;height:1px;background:#e9e9e9"></div>
<div class="abs" style="left:154px;top:584.1px;width:2378px;height:1px;background:#e9e9e9"></div>
<div class="abs" style="left:154px;top:625.1px;width:2378px;height:1px;background:#e9e9e9"></div>
<div class="abs" style="left:190px;top:666.1px;width:2342px;height:1px;background:#e9e9e9"></div>
<div class="abs" style="left:190px;top:707.1px;width:2342px;height:1px;background:#e9e9e9"></div>
<div class="abs" style="left:226px;top:748.1px;width:2306px;height:1px;background:#e9e9e9"></div>
<div class="abs" style="left:45.0px;top:293px;width:1px;height:466px;background:#e4e4e4"></div>
<div class="abs" style="left:372.8px;top:293px;width:1px;height:466px;background:#e4e4e4"></div>
<div class="abs" style="left:619.4px;top:293px;width:1px;height:466px;background:#e4e4e4"></div>
<div class="abs" style="left:1432.7px;top:293px;width:1px;height:466px;background:#e4e4e4"></div>
<div class="abs" style="left:1570.0px;top:293px;width:1px;height:466px;background:#e4e4e4"></div>
<div class="abs" style="left:1647.2px;top:293px;width:1px;height:466px;background:#e4e4e4"></div>
<div class="abs" style="left:1793.1px;top:293px;width:1px;height:466px;background:#e4e4e4"></div>
<div class="abs" style="left:1940.0px;top:293px;width:1px;height:466px;background:#e4e4e4"></div>
<div class="abs" style="left:2088.1px;top:293px;width:1px;height:466px;background:#e4e4e4"></div>
<div class="abs" style="left:2236.3px;top:293px;width:1px;height:466px;background:#e4e4e4"></div>
<div class="abs" style="left:2384.0px;top:293px;width:1px;height:466px;background:#e4e4e4"></div>
<div class="abs" style="left:2531.3px;top:293px;width:1px;height:466px;background:#e4e4e4"></div>
<div class="abs" style="left:46px;top:338px;width:574px;height:42px;background:#e5e5e5"></div>
<div class="abs" style="left:1434px;top:338px;width:1098px;height:42px;background:#e5e5e5"></div>
<svg class="abs" style="left:56px;top:304px" width="24" height="23" viewBox="0 0 24 23"><g font-family="'Liberation Sans',sans-serif" font-weight="bold" font-size="7.5" fill="#e8304a"><text x="1" y="7">1</text><text x="1" y="14.3">2</text><text x="1" y="21.6">3</text></g><path d="M8.5 3.8h14M8.5 11.3h14M8.5 18.8h14" stroke="#555" stroke-width="1.5"/></svg>
<svg class="abs" style="left:342px;top:308px" width="18" height="13" viewBox="0 0 18 13"><path d="M7.5 1.5h3M4.5 6.5h9M1 11.3h16" stroke="#333" stroke-width="1.4"/></svg>
<svg class="abs" style="left:386px;top:304px" width="24" height="24" viewBox="0 0 24 24"><path d="M16.8 12V1.8H1.8V19.5H8" fill="none" stroke="#555" stroke-width="1.5"/><g transform="translate(14.4 16.7)" fill="#0a78d8"><circle r="3.9"/><g stroke="#0a78d8" stroke-width="2.3"><path d="M0-5.6V5.6M-5.6 0H5.6M-4-4L4 4M-4 4L4-4"/></g><circle r="1.6" fill="#fafafa"/></g></svg>
<svg class="abs" style="left:632px;top:304px" width="20" height="22" viewBox="0 0 20 22"><rect x="1.5" y="1.2" width="17" height="19.6" rx="1" fill="#fafafa" stroke="#555" stroke-width="1.5"/><text x="10" y="12" text-anchor="middle" font-family="'Liberation Sans',sans-serif" font-weight="bold" font-size="10.5" fill="#0a78d8">A</text><path d="M5 13.3h10" stroke="#0a78d8" stroke-width="1"/><path d="M4.5 15.8h11M4.5 18h11" stroke="#888" stroke-width="1"/></svg>
<svg class="abs" style="left:1445px;top:304px" width="24" height="22" viewBox="0 0 24 22"><rect x="1" y="1" width="17" height="18" fill="#fafafa" stroke="#555" stroke-width="1.5"/><rect x="3.5" y="3.5" width="12" height="3.6" fill="#0a78d8"/><g fill="#555"><rect x="3.5" y="9.5" width="3" height="2.6"/><rect x="8" y="9.5" width="3" height="2.6"/><rect x="3.5" y="14" width="3" height="2.6"/><rect x="8" y="14" width="3" height="2.6"/></g><rect x="12.5" y="9.5" width="3" height="2.6" fill="#ff8c00"/><g fill="#aaa"><rect x="13" y="14" width="4.5" height="2.8"/><rect x="18.5" y="14" width="4.5" height="2.8"/><rect x="13" y="18" width="4.5" height="2.8"/><rect x="18.5" y="18" width="4.5" height="2.8"/></g></svg>
<svg class="abs" style="left:1581px;top:302px" width="26" height="26" viewBox="0 0 26 26"><circle cx="8.8" cy="9.4" r="7.6" fill="#0a78d8"/><path d="M9.8 8.4V0.8a7.6 7.6 0 0 1 7.6 7.6z" fill="#14907c" stroke="#fafafa" stroke-width="1"/><path d="M4.6 24.8H24V6z" fill="#ff8c00" stroke="#fafafa" stroke-width=".8"/><path d="M17.5 22h3.5v-3.5z" fill="#fafafa"/></svg>
<svg class="abs" style="left:2246px;top:307px" width="26" height="18" viewBox="0 0 26 18"><rect x="1.2" y="1" width="23.5" height="15.6" rx="1.5" fill="#fafafa" stroke="#444" stroke-width="1.5"/><path d="M17 5V3.8H8.8L13.2 8.8 8.8 13.8H17V12.6" fill="none" stroke="#e83048" stroke-width="1.6"/></svg>
<svg class="abs" style="left:2394px;top:304px" width="26" height="24" viewBox="0 0 26 24"><rect x="1" y="0.5" width="21" height="4.2" fill="#0a78d8"/><g fill="#a8a8a8"><rect x="1" y="6.8" width="5.8" height="4"/><rect x="8.6" y="6.8" width="5.8" height="4"/><rect x="16.2" y="6.8" width="5.8" height="4"/><rect x="1" y="12.6" width="5.8" height="4"/><rect x="8.6" y="12.6" width="5.8" height="4"/></g><path d="M24.5 14.5V13.3H17l3.7 4.2-3.7 4.2h7.5v-1.2" fill="none" stroke="#0a78d8" stroke-width="1.6"/></svg>
<svg class="abs" style="left:18px;top:351px" width="12" height="16" viewBox="0 0 12 16"><path d="M1.5 1.8L10 8l-8.5 6.2z" fill="none" stroke="#666" stroke-width="1.3" stroke-linejoin="round"/></svg>
<svg class="abs" style="left:92px;top:477.6px" width="16" height="10" viewBox="0 0 16 10"><path d="M2 2l6 6 6-6" fill="none" stroke="#333" stroke-width="1.5"/></svg>
<svg class="abs" style="left:128px;top:600.6px" width="16" height="10" viewBox="0 0 16 10"><path d="M2 2l6 6 6-6" fill="none" stroke="#333" stroke-width="1.5"/></svg>
<svg class="abs" style="left:164px;top:682.6px" width="16" height="10" viewBox="0 0 16 10"><path d="M2 2l6 6 6-6" fill="none" stroke="#333" stroke-width="1.5"/></svg>
<div class="abs" style="left:2542px;top:387px;width:6px;height:28px;border-radius:3px;background:#8c8c8c"></div>
<span class="t" style="left:82.9px;top:308px;font-size:16px;letter-spacing:-0.69px;">OZ</span>
<span class="t" style="left:409.8px;top:308px;font-size:16px;letter-spacing:0.23px;">PosArt</span>
<span class="t" style="left:656.3px;top:308px;font-size:16px;letter-spacing:-0.40px;">Kurztext</span>
<span class="t" style="left:1470.0px;top:308px;font-size:16px;letter-spacing:-0.58px;">Menge</span>
<span class="t" style="left:1607.5px;top:308px;font-size:16px;letter-spacing:-0.38px;">Ei...</span>
<span class="t" style="left:1657.4px;top:308px;font-size:16px;letter-spacing:-0.59px;">Material</span>
<span class="t" style="left:1802.6px;top:308px;font-size:16px;letter-spacing:-0.37px;">Lohn</span>
<span class="t" style="left:1950.0px;top:308px;font-size:16px;letter-spacing:-0.35px;">Geräte</span>
<span class="t" style="left:2098.0px;top:308px;font-size:16px;letter-spacing:-0.33px;">Nachunternehmer</span>
<span class="t" style="left:2355.2px;top:308px;font-size:16px;">EP</span>
<span class="t" style="left:2500.2px;top:308px;font-size:16px;">GP</span>
<span class="t" style="left:384.1px;top:352px;font-size:16px;letter-spacing:-0.39px;">TEXT</span>
<span class="t" style="left:629.3px;top:352px;font-size:16px;letter-spacing:-0.33px;">Grafiken</span>
<span class="t" style="left:383.1px;top:393px;font-size:16px;letter-spacing:-0.38px;">HINWEIS</span>
<span class="t" style="left:629.3px;top:393px;font-size:16px;letter-spacing:-0.36px;">Hinweis Hauptgebäude</span>
<span class="t" style="left:384.1px;top:434px;font-size:16px;letter-spacing:-0.39px;">TEXT</span>
<span class="t" style="left:629.3px;top:434px;font-size:16px;letter-spacing:-0.37px;">Schlussbemerkung</span>
<span class="t" style="left:129.5px;top:475px;font-size:16px;">1</span>
<span class="t" style="left:383.1px;top:475px;font-size:16px;letter-spacing:-0.39px;">BEREICH</span>
<span class="t" style="left:629.3px;top:475px;font-size:16px;letter-spacing:-0.38px;">Hauptgebäude</span>
<span class="t" style="left:2477.6px;top:475px;font-size:16px;letter-spacing:-0.33px;">0,00 €</span>
<span class="t" style="left:383.1px;top:516px;font-size:16px;letter-spacing:-0.38px;">HINWEIS</span>
<span class="t" style="left:629.3px;top:516px;font-size:16px;letter-spacing:-0.34px;">Hinweis zum Bereich</span>
<span class="t" style="left:383.1px;top:557px;font-size:16px;letter-spacing:-0.38px;">HINWEIS</span>
<span class="t" style="left:629.3px;top:557px;font-size:16px;letter-spacing:-0.34px;">Hinweise zum Bereich</span>
<span class="t" style="left:165.5px;top:598px;font-size:16px;letter-spacing:-0.34px;">1.10</span>
<span class="t" style="left:383.1px;top:598px;font-size:16px;letter-spacing:-0.39px;">BEREICH</span>
<span class="t" style="left:629.3px;top:598px;font-size:16px;letter-spacing:-0.32px;">Bereich 1.10 mit</span>
<span class="t" style="left:2477.6px;top:598px;font-size:16px;letter-spacing:-0.33px;">0,00 €</span>
<span class="t" style="left:383.1px;top:639px;font-size:16px;letter-spacing:-0.38px;">HINWEIS</span>
<span class="t" style="left:629.3px;top:639px;font-size:16px;letter-spacing:-0.36px;">Hinweise zum</span>
<span class="t" style="left:201.5px;top:680px;font-size:16px;letter-spacing:-0.34px;">1.10.10</span>
<span class="t" style="left:383.1px;top:680px;font-size:16px;letter-spacing:-0.39px;">BEREICH</span>
<span class="t" style="left:629.3px;top:680px;font-size:16px;letter-spacing:-0.34px;">Normalpositionen</span>
<span class="t" style="left:2477.6px;top:680px;font-size:16px;letter-spacing:-0.33px;">0,00 €</span>
<span class="t" style="left:383.1px;top:721px;font-size:16px;letter-spacing:-0.38px;">HINWEIS</span>
<span class="t" style="left:629.3px;top:721px;font-size:16px;letter-spacing:-0.33px;">Hinweistext</span>

<div class="abs" style="left:2px;top:819px;width:1704px;height:2px;background:#c9c9c9"></div>
<div class="abs" style="left:5px;top:784px;width:148px;height:35px;background:#f3f3f3;border:1px solid #d2d2d2;border-bottom:none;border-radius:7px 7px 0 0"></div>
<div class="abs" style="left:159px;top:786px;width:166px;height:33px;background:#f3f3f3;border:1px solid #d2d2d2;border-bottom:none;border-radius:7px 7px 0 0"></div>
<svg class="abs" style="left:166px;top:792px" width="20" height="20" viewBox="0 0 20 20"><path d="M1 1h18v13H7l-3.5 4v-4H1z" fill="#ff8c00"/></svg>
<div class="abs" style="left:2px;top:821px;width:1704px;height:50px;background:#fff;border-bottom:1px solid #d4d4d4"></div>
<div class="abs" style="left:2px;top:895px;width:1678px;height:430px;background:#fff;border-top:1px solid #cfcfcf"></div>
<div class="abs" style="left:1680px;top:896px;width:26px;height:429px;background:#f0f0f0"></div>
<div class="abs" style="left:1689px;top:1008px;width:6px;height:146px;border-radius:3px;background:#8a8a8a"></div>
<div class="abs" style="left:2px;top:1324px;width:1704px;height:3px;background:#cbcbcb"></div>
<div class="abs" style="left:1706px;top:1325px;width:852px;height:2px;background:#d2d2d2"></div>
<div class="abs" style="left:1705px;top:786px;width:2px;height:540px;background:#dadada"></div>
<svg class="abs" style="left:0;top:0" width="360" height="1326" viewBox="0 0 360 1326"><g stroke="#4a4a4a" stroke-width="1" stroke-linejoin="round"><path d="M55.2 977.3H276.6V1242.7H55.2z M62.8 985.3V1234.3H268.9V985.3z" fill="#fff" fill-rule="evenodd"/><rect x="55.2" y="977.3" width="29.3" height="8" fill="#8fcdee"/><rect x="106.6" y="977.3" width="16.3" height="8" fill="#8fcdee"/><rect x="151.4" y="977.3" width="15" height="8" fill="#8fcdee"/><rect x="195" y="977.3" width="81.6" height="8" fill="#8fcdee"/><rect x="55.2" y="977.3" width="7.6" height="23.3" fill="#8fcdee"/><rect x="55.2" y="1043.5" width="7.6" height="50.5" fill="#8fcdee"/><rect x="55.2" y="1125" width="7.6" height="51" fill="#8fcdee"/><rect x="55.2" y="1206" width="7.6" height="36.7" fill="#8fcdee"/><rect x="269" y="977.3" width="7.6" height="28.5" fill="#8fcdee"/><rect x="269" y="1038.3" width="7.6" height="79.1" fill="#8fcdee"/><rect x="269" y="1177" width="7.6" height="65.7" fill="#8fcdee"/><rect x="55.2" y="1234.5" width="13.8" height="8.2" fill="#8fcdee"/><rect x="95.5" y="1234.5" width="19.1" height="8.2" fill="#8fcdee"/><rect x="261.5" y="1234.5" width="15.1" height="8.2" fill="#8fcdee"/></g><g stroke="#4a4a4a" stroke-width=".7" fill="none"><path d="M122.9 981.3H151.4M166.4 981.3H195M59 1000.6V1043.5M59 1094V1125M59 1176V1206M272.8 1005.8V1038.3M272.8 1117.4V1177M114.6 1238.6H261.5"/></g><g stroke="#4a4a4a" stroke-width=".7"><rect x="62.8" y="1063" width="59.4" height="4" fill="#93d15c"/><rect x="148.2" y="1063" width="25.3" height="4" fill="#93d15c"/><rect x="195.6" y="1063" width="73.4" height="4" fill="#93d15c"/><rect x="173.5" y="1063" width="22.1" height="4" fill="#c8c8c8"/><rect x="219" y="985.3" width="3.2" height="29" fill="#93d15c"/><rect x="219" y="1037" width="3.2" height="26" fill="#93d15c"/><rect x="103" y="1067" width="3.4" height="124" fill="#93d15c"/><rect x="103" y="1217.8" width="3.4" height="16.5" fill="#93d15c"/></g><g stroke="#4a4a4a" stroke-width=".8" fill="none"><path d="M44 1005.5H301M158.8 958L156.4 1258M44 1105.2H292M306.2 965V1254M47.4 1272.6H286.3"/><path d="M86.5 977.3L104.7 964M104 966c1.5 3.5 2.2 7 2.2 11M122.2 1063L143.5 1051.5M143 1052c2.2 3.5 3.5 7 4.2 11M219 1014L207.5 1028.5 219 1037M207.5 1028.5c3.5 3.5 7 6 11.5 7.5M103 1191L90.5 1206.5 103 1217.8M90.5 1206.5c3.5 4.5 7.5 8 12.5 10M69 1243L90.5 1256M91.5 1243.5v12.5"/><path d="M52 1009l5-7M60 1009l5-7M266 1009l5-7M274 1009l5-7M155 980l7-6M216 1009l5-7M52 1109l5-7M60 1109l5-7M100 1109l5-7M266 1109l5-7M274 1109l5-7M302 970l8 7M302 1247l8 7M50 1276l3-8M281 1277l5-9M153 1245l7-3M153 1066l7-3"/><path d="M79 1020.5H128.5M80.6 1017V1046M126.8 1016.5V1045M78 1041H127M225 1017.5H265M226.5 1014V1042M260.5 1013V1041M225.5 1035.8H264M168.5 1150H222M170.5 1147V1171M220 1144V1169M167 1167.4H226M74.2 1136V1194M71 1139.8H94M90.6 1136V1194M72 1190.4H96"/></g><g font-family="'Liberation Sans',sans-serif" font-style="italic" fill="#4a4a4a"><text x="43.5" y="1004" font-size="8.5">24</text><text x="127" y="1003.5" font-size="8.5">5,26</text><text x="203" y="1004" font-size="8.5">11</text><text x="211" y="999" font-size="6">5</text><text x="236" y="1004" font-size="8.5">1,63</text><text x="254" y="998" font-size="6">5</text><text x="280" y="1003" font-size="8.5">24</text><text x="157" y="975" font-size="8.5" transform="rotate(-80 157 975)">24</text><text x="158" y="1041" font-size="8.5" transform="rotate(-80 158 1041)">2,63</text><text x="155.5" y="1021" font-size="6" transform="rotate(-80 155.5 1021)">5</text><text x="156" y="1082" font-size="8" transform="rotate(-70 156 1082)">11</text><text x="151" y="1072" font-size="6" transform="rotate(-70 151 1072)">5</text><text x="43" y="1103.5" font-size="8.5">24</text><text x="70" y="1103.5" font-size="8.5">1,38</text><text x="88" y="1097" font-size="6">5</text><text x="108" y="1103.5" font-size="8.5">11</text><text x="117" y="1096" font-size="6">5</text><text x="173" y="1102" font-size="8.5">5,51</text><text x="279" y="1102" font-size="8.5">24</text><text x="311" y="1126" font-size="9" transform="rotate(-85 311 1126)">8,99</text><text x="153" y="1180" font-size="9" transform="rotate(-85 153 1180)">5,76</text><text x="156" y="1258" font-size="8.5" transform="rotate(-85 156 1258)">24</text><text x="160" y="1271" font-size="8.5">7,49</text><text x="85.2" y="1038.6" font-size="19" font-style="normal" lengthAdjust="spacingAndGlyphs" textLength="38" fill="#5a5a5a">HASEN</text><text x="229.4" y="1033" font-size="16.5" font-style="normal" lengthAdjust="spacingAndGlyphs" textLength="28" fill="#5a5a5a">Futter</text><text x="172.7" y="1163.9" font-size="14" font-style="normal" lengthAdjust="spacingAndGlyphs" textLength="45.6" fill="#5a5a5a">GARAGE</text><text x="88.9" y="1187" font-size="15" transform="rotate(-90 88.9 1187)" font-style="normal" lengthAdjust="spacingAndGlyphs" textLength="44" fill="#5a5a5a">GERÄTE</text><text x="298" y="1318.5" font-size="12.5" font-style="normal" fill="#5a5a5a" textLength="34" lengthAdjust="spacingAndGlyphs">+5,00</text></g><path d="M297 1321.5l40 1.8" stroke="#4a4a4a" stroke-width="1.2"/></svg>
<span class="t" style="left:11.2px;top:794px;font-size:16px;letter-spacing:-0.15px;">Kurz- und Langtext</span>
<span class="t" style="left:190.3px;top:795px;font-size:16px;letter-spacing:-0.40px;">Bieterkommentare</span>
<span class="t" style="left:24.3px;top:828px;font-size:20px;font-family:'Liberation Sans',sans-serif;color:#111;">Grafiken</span>
<span class="t" style="left:435.6px;top:906px;font-size:28px;font-family:'Liberation Sans',sans-serif;font-weight:700;color:#000;">Grafiken</span>
<span class="t" style="left:24.3px;top:937px;font-size:20px;font-family:'Liberation Sans',sans-serif;color:#000;">Grafiken, wie Lagepläne oder Skizzen können mit intergriert werden.</span>
<span class="t" style="left:24.3px;top:1283px;font-size:20px;letter-spacing:-0.02px;font-family:'Liberation Sans',sans-serif;color:#000;">Das nächste Bild ist etwas eingerückt:</span>

<div class="abs" style="left:1732px;top:827px;width:826px;height:498px;background:#f5f5f5;border:1px solid #8080e6"></div>
<div class="abs" style="left:1852.0px;top:786px;width:111.2px;height:41px;background:#f3f3f3;border:1px solid #d4d4d4;border-bottom:none;border-radius:7px 7px 0 0;"></div>
<div class="abs" style="left:1963.2px;top:786px;width:160.5px;height:41px;background:#f3f3f3;border:1px solid #d4d4d4;border-bottom:none;border-radius:7px 7px 0 0;"></div>
<div class="abs" style="left:2123.7px;top:786px;width:185.7px;height:41px;background:#f3f3f3;border:1px solid #d4d4d4;border-bottom:none;border-radius:7px 7px 0 0;"></div>
<div class="abs" style="left:2309.4px;top:784px;width:114.6px;height:43px;background:#f4f4f4;border:1px solid #d4d4d4;border-bottom:none;border-radius:7px 7px 0 0"></div>
<div class="abs" style="left:2424.0px;top:786px;width:76.0px;height:41px;background:#f3f3f3;border:1px solid #d4d4d4;border-bottom:none;border-radius:7px 7px 0 0;border-right:none;border-radius:7px 0 0 0;width:58.700px;"></div>
<svg class="abs" style="left:2495px;top:798px" width="12" height="16" viewBox="0 0 12 16"><path d="M9 1.5L2.5 8 9 14.5" fill="none" stroke="#c4c4c4" stroke-width="1.5"/></svg>
<svg class="abs" style="left:2531px;top:798px" width="12" height="16" viewBox="0 0 12 16"><path d="M3 1.5L9.5 8 3 14.5" fill="none" stroke="#222" stroke-width="1.6"/></svg>
<div class="abs" style="left:1774.7px;top:879.6px;width:488.6px;height:425.4px;background:#fff"></div>
<svg class="abs" style="left:0;top:0" width="2560" height="1330" viewBox="0 0 2560 1330"><path d="M1774.7 1251.2H2263.3" stroke="#e4e4e4" stroke-width="1"/><path d="M1774.7 1197.4H2263.3" stroke="#e4e4e4" stroke-width="1"/><path d="M1774.7 1143.6H2263.3" stroke="#e4e4e4" stroke-width="1"/><path d="M1774.7 1089.8H2263.3" stroke="#e4e4e4" stroke-width="1"/><path d="M1774.7 1036H2263.3" stroke="#e4e4e4" stroke-width="1"/><path d="M1774.7 982.2H2263.3" stroke="#e4e4e4" stroke-width="1"/><path d="M1774.7 928.4H2263.3" stroke="#e4e4e4" stroke-width="1"/><path d="M1768.7 1305H1774.7" stroke="#dcdcdc" stroke-width="1"/><path d="M1771.7 1294.2H1774.7" stroke="#e8e8e8" stroke-width="1"/><path d="M1771.7 1283.5H1774.7" stroke="#e8e8e8" stroke-width="1"/><path d="M1771.7 1272.7H1774.7" stroke="#e8e8e8" stroke-width="1"/><path d="M1771.7 1262H1774.7" stroke="#e8e8e8" stroke-width="1"/><path d="M1768.7 1251.2H1774.7" stroke="#dcdcdc" stroke-width="1"/><path d="M1771.7 1240.4H1774.7" stroke="#e8e8e8" stroke-width="1"/><path d="M1771.7 1229.7H1774.7" stroke="#e8e8e8" stroke-width="1"/><path d="M1771.7 1218.9H1774.7" stroke="#e8e8e8" stroke-width="1"/><path d="M1771.7 1208.2H1774.7" stroke="#e8e8e8" stroke-width="1"/><path d="M1768.7 1197.4H1774.7" stroke="#dcdcdc" stroke-width="1"/><path d="M1771.7 1186.6H1774.7" stroke="#e8e8e8" stroke-width="1"/><path d="M1771.7 1175.9H1774.7" stroke="#e8e8e8" stroke-width="1"/><path d="M1771.7 1165.1H1774.7" stroke="#e8e8e8" stroke-width="1"/><path d="M1771.7 1154.4H1774.7" stroke="#e8e8e8" stroke-width="1"/><path d="M1768.7 1143.6H1774.7" stroke="#dcdcdc" stroke-width="1"/><path d="M1771.7 1132.8H1774.7" stroke="#e8e8e8" stroke-width="1"/><path d="M1771.7 1122.1H1774.7" stroke="#e8e8e8" stroke-width="1"/><path d="M1771.7 1111.3H1774.7" stroke="#e8e8e8" stroke-width="1"/><path d="M1771.7 1100.6H1774.7" stroke="#e8e8e8" stroke-width="1"/><path d="M1768.7 1089.8H1774.7" stroke="#dcdcdc" stroke-width="1"/><path d="M1771.7 1079H1774.7" stroke="#e8e8e8" stroke-width="1"/><path d="M1771.7 1068.3H1774.7" stroke="#e8e8e8" stroke-width="1"/><path d="M1771.7 1057.5H1774.7" stroke="#e8e8e8" stroke-width="1"/><path d="M1771.7 1046.8H1774.7" stroke="#e8e8e8" stroke-width="1"/><path d="M1768.7 1036H1774.7" stroke="#dcdcdc" stroke-width="1"/><path d="M1771.7 1025.2H1774.7" stroke="#e8e8e8" stroke-width="1"/><path d="M1771.7 1014.5H1774.7" stroke="#e8e8e8" stroke-width="1"/><path d="M1771.7 1003.7H1774.7" stroke="#e8e8e8" stroke-width="1"/><path d="M1771.7 993H1774.7" stroke="#e8e8e8" stroke-width="1"/><path d="M1768.7 982.2H1774.7" stroke="#dcdcdc" stroke-width="1"/><path d="M1771.7 971.4H1774.7" stroke="#e8e8e8" stroke-width="1"/><path d="M1771.7 960.7H1774.7" stroke="#e8e8e8" stroke-width="1"/><path d="M1771.7 949.9H1774.7" stroke="#e8e8e8" stroke-width="1"/><path d="M1771.7 939.2H1774.7" stroke="#e8e8e8" stroke-width="1"/><path d="M1768.7 928.4H1774.7" stroke="#dcdcdc" stroke-width="1"/><path d="M1771.7 917.6H1774.7" stroke="#e8e8e8" stroke-width="1"/><path d="M1771.7 906.9H1774.7" stroke="#e8e8e8" stroke-width="1"/><path d="M1771.7 896.1H1774.7" stroke="#e8e8e8" stroke-width="1"/><path d="M1771.7 885.4H1774.7" stroke="#e8e8e8" stroke-width="1"/><rect x="1774.7" y="917.6" width="69.8" height="387.4" fill="#338296"/><rect x="1844.5" y="1154.4" width="69.8" height="150.6" fill="#eea800"/><rect x="1914.3" y="1262" width="69.8" height="43" fill="#b0282c"/><rect x="1984.1" y="1218.9" width="69.8" height="86.1" fill="#789a2e"/><rect x="2053.9" y="1294.2" width="69.8" height="10.8" fill="#883c08"/><rect x="2123.7" y="1294.2" width="69.8" height="10.8" fill="#44507f"/><rect x="2193.5" y="1272.7" width="69.8" height="32.3" fill="#88c8d8"/></svg>
<div class="abs" style="left:2280.600px;top:879.800px;width:260px;height:186.700px;background:linear-gradient(#a9a9a9,#b8b8b8 30%,#d8d8d8 65%,#f0f0f0);border:1px solid #e2e2e2;border-top-color:#b4b4b4"></div>
<div class="abs" style="left:2285px;top:884.0px;width:28px;height:22px;background:#338296;border:1px solid #3c82c4"></div>
<div class="abs" style="left:2316px;top:884.0px;width:153.5px;height:21px;background:#ababab"></div>
<div class="abs" style="left:2285px;top:910.0px;width:28px;height:22px;background:#eea800;border:1px solid #3c82c4"></div>
<div class="abs" style="left:2316px;top:910.0px;width:120.7px;height:21px;background:#ababab"></div>
<div class="abs" style="left:2285px;top:936.0px;width:28px;height:22px;background:#b0282c;border:1px solid #3c82c4"></div>
<div class="abs" style="left:2316px;top:936.0px;width:137.3px;height:21px;background:#ababab"></div>
<div class="abs" style="left:2285px;top:962.0px;width:28px;height:22px;background:#789a2e;border:1px solid #3c82c4"></div>
<div class="abs" style="left:2316px;top:962.0px;width:129.5px;height:21px;background:#ababab"></div>
<div class="abs" style="left:2285px;top:988.0px;width:28px;height:22px;background:#883c08;border:1px solid #3c82c4"></div>
<div class="abs" style="left:2316px;top:988.0px;width:221.7px;height:21px;background:#ababab"></div>
<div class="abs" style="left:2285px;top:1014.0px;width:28px;height:22px;background:#44507f;border:1px solid #3c82c4"></div>
<div class="abs" style="left:2316px;top:1014.0px;width:158.8px;height:21px;background:#ababab"></div>
<div class="abs" style="left:2285px;top:1040.0px;width:28px;height:22px;background:#88c8d8;border:1px solid #3c82c4"></div>
<div class="abs" style="left:2316px;top:1040.0px;width:172.2px;height:21px;background:#ababab"></div>
<span class="t" style="left:1855.5px;top:799px;font-size:16px;letter-spacing:-0.75px;">Zuordnungen</span>
<span class="t" style="left:1980.7px;top:799px;font-size:16px;letter-spacing:0.12px;">LV Informationen</span>
<span class="t" style="left:2140.6px;top:799px;font-size:16px;letter-spacing:-0.09px;">Projektinformationen</span>
<span class="t" style="left:2325.8px;top:798px;font-size:16px;letter-spacing:-0.10px;">LV Statistik</span>
<span class="t" style="left:2441.2px;top:799px;font-size:16px;">GAEB</span>
<span class="t" style="left:1989.1px;top:841px;font-size:21px;letter-spacing:0.38px;">In diesem LV sind 68 Positionen</span>
<span class="t" style="left:1753.1px;top:1299px;font-size:16px;">0</span>
<span class="t" style="left:1753.1px;top:1245px;font-size:16px;">5</span>
<span class="t" style="left:1744.0px;top:1191px;font-size:16px;">10</span>
<span class="t" style="left:1744.0px;top:1137px;font-size:16px;">15</span>
<span class="t" style="left:1744.0px;top:1084px;font-size:16px;">20</span>
<span class="t" style="left:1744.0px;top:1030px;font-size:16px;">25</span>
<span class="t" style="left:1744.0px;top:976px;font-size:16px;">30</span>
<span class="t" style="left:1744.0px;top:922px;font-size:16px;">35</span>
<span class="t" style="left:2316.7px;top:887px;font-size:16px;letter-spacing:-0.29px;">36 Normalpositionen</span>
<span class="t" style="left:2316.7px;top:913px;font-size:16px;letter-spacing:-0.30px;">14 Hinweistexte</span>
<span class="t" style="left:2316.7px;top:939px;font-size:16px;letter-spacing:-0.29px;">4 Grundpositionen</span>
<span class="t" style="left:2316.7px;top:965px;font-size:16px;letter-spacing:-0.21px;">8 Wahlpositionen</span>
<span class="t" style="left:2316.7px;top:991px;font-size:16px;letter-spacing:-0.26px;">1 Ausführungsbeschreibungen</span>
<span class="t" style="left:2316.7px;top:1017px;font-size:16px;letter-spacing:-0.28px;">1 Leitbeschreibungen</span>
<span class="t" style="left:2316.7px;top:1043px;font-size:16px;letter-spacing:-0.29px;">3 Unterbeschreibungen</span>

<div class="abs" style="left:2px;top:1327px;width:2556px;height:52px;background:#fafafa"></div>
<span class="t" style="left:1725.0px;top:1346px;font-size:16px;letter-spacing:0.07px;">Positionen (mit EP 0 von 74) *** Positionen (mit freien Mengen 0 von 3) *** Positionen (mit Zuschlag 0 von 6)</span>
<svg class="abs" style="left:2544px;top:1358px" width="12" height="12" viewBox="0 0 12 12"><g fill="#9a9a9a"><circle cx="2" cy="2.5" r="1.5"/><circle cx="8" cy="2.5" r="1.5"/><circle cx="2" cy="8.5" r="1.5"/><circle cx="8" cy="8.5" r="1.5"/></g></svg>

<div id="dlg" class="abs" style="left:732px;top:369px;width:1166px;height:642px;background:#f3f3f3;border:1px solid #9a9a9a;box-shadow:0 20px 46px 2px rgba(0,0,0,.36),0 1px 10px rgba(0,0,0,.25)"></div>
<svg class="abs" style="left:1852px;top:385px" width="18" height="18" viewBox="0 0 18 18"><path d="M1.5 1.5l15 15M16.5 1.5l-15 15" stroke="#222" stroke-width="1.5"/></svg>
<div class="abs" style="left:743.0px;top:447.0px;width:480.0px;height:137.4px;border:1px solid #d9d9d9;border-radius:4px"></div>
<div class="abs" style="left:759.8px;top:446.0px;width:155.2px;height:3px;background:#f3f3f3"></div>
<div class="abs" style="left:743.0px;top:609.0px;width:480.0px;height:180.1px;border:1px solid #d9d9d9;border-radius:4px"></div>
<div class="abs" style="left:759.8px;top:608.0px;width:61.4px;height:3px;background:#f3f3f3"></div>
<div class="abs" style="left:1275.0px;top:447.0px;width:611.5px;height:341.8px;border:1px solid #d9d9d9;border-radius:4px"></div>
<div class="abs" style="left:1291.7px;top:446.0px;width:138.6px;height:3px;background:#f3f3f3"></div>
<div class="abs" style="left:759.0px;top:485.0px;width:27px;height:27px;border-radius:50%;background:#fff;border:1px solid #d0d0d0;border-bottom-color:#a8a8a8"></div>
<div class="abs" style="left:759.0px;top:532.0px;width:27px;height:27px;border-radius:50%;background:#fff;border:6.500px solid #0067c0"></div>
<div class="abs" style="left:759.0px;top:646.0px;width:27px;height:27px;border-radius:50%;background:#fff;border:1px solid #d0d0d0;border-bottom-color:#a8a8a8"></div>
<div class="abs" style="left:759.0px;top:691.0px;width:27px;height:27px;border-radius:50%;background:#fff;border:1px solid #d0d0d0;border-bottom-color:#a8a8a8"></div>
<div class="abs" style="left:759.0px;top:736.0px;width:27px;height:27px;border-radius:50%;background:#fff;border:6.500px solid #0067c0"></div>
<div class="abs" style="left:1285.0px;top:471.0px;width:27px;height:27px;border-radius:4px;background:#fff;border:2px solid #0067c0"><svg width="26" height="26" viewBox="0 0 26 26" style="position:absolute;left:-2px;top:-2px"><path d="M6.5 13.2l4.4 4.4L19.8 8.7" fill="none" stroke="#0067c0" stroke-width="2.2"/></svg></div>
<div class="abs" style="left:1285.0px;top:506.0px;width:27px;height:27px;border-radius:4px;background:#0067c0"><svg width="26" height="26" viewBox="0 0 26 26" style="position:absolute;left:-0px;top:-0px"><path d="M6.5 13.2l4.4 4.4L19.8 8.7" fill="none" stroke="#fff" stroke-width="1.7"/></svg></div>
<div class="abs" style="left:1285.0px;top:541.0px;width:27px;height:27px;border-radius:4px;background:#0067c0"><svg width="26" height="26" viewBox="0 0 26 26" style="position:absolute;left:-0px;top:-0px"><path d="M6.5 13.2l4.4 4.4L19.8 8.7" fill="none" stroke="#fff" stroke-width="1.7"/></svg></div>
<div class="abs" style="left:1285.0px;top:576.0px;width:27px;height:27px;border-radius:4px;background:#0067c0"><svg width="26" height="26" viewBox="0 0 26 26" style="position:absolute;left:-0px;top:-0px"><path d="M6.5 13.2l4.4 4.4L19.8 8.7" fill="none" stroke="#fff" stroke-width="1.7"/></svg></div>
<div class="abs" style="left:1285.0px;top:611.0px;width:27px;height:27px;border-radius:4px;background:#fff;border:1px solid #cfcfcf;border-bottom-color:#b4b4b4"></div>
<div class="abs" style="left:1285.0px;top:646.0px;width:27px;height:27px;border-radius:4px;background:#0067c0"><svg width="26" height="26" viewBox="0 0 26 26" style="position:absolute;left:-0px;top:-0px"><path d="M6.5 13.2l4.4 4.4L19.8 8.7" fill="none" stroke="#fff" stroke-width="1.7"/></svg></div>
<div class="abs" style="left:1285.0px;top:681.0px;width:27px;height:27px;border-radius:4px;background:#fff;border:1px solid #cfcfcf;border-bottom-color:#b4b4b4"></div>
<div class="abs" style="left:1285.0px;top:716.0px;width:27px;height:27px;border-radius:4px;background:#fff;border:1px solid #cfcfcf;border-bottom-color:#b4b4b4"></div>
<div class="abs" style="left:1285.0px;top:751.0px;width:27px;height:27px;border-radius:4px;background:#f5f5f5;border:1px solid #e6e6e6"></div>
<div class="abs" style="left:743.4px;top:966.0px;width:27px;height:27px;border-radius:4px;background:#fff;border:1px solid #cfcfcf;border-bottom-color:#b4b4b4"></div>
<div class="abs" style="left:1584px;top:958px;width:142px;height:43px;border-radius:5px;background:#fff;border:2px solid #0067c0"></div>
<div class="abs" style="left:1745.500px;top:958px;width:141px;height:43px;border-radius:5px;background:#fdfdfd;border:1px solid #e2e2e2;border-bottom-color:#cfcfcf"></div>
<span class="t" style="left:756.2px;top:387px;font-size:16px;letter-spacing:-0.19px;">Optionen für die Druckvorschau</span>
<span class="t" style="left:765.8px;top:437px;font-size:16px;letter-spacing:-0.24px;">Preise oder Blankett</span>
<span class="t" style="left:765.8px;top:599px;font-size:16px;letter-spacing:0.78px;">LV-Art</span>
<span class="t" style="left:1298.2px;top:437px;font-size:16px;letter-spacing:0.03px;">Optionen zum LV</span>
<span class="t" style="left:794.0px;top:492px;font-size:16px;letter-spacing:-0.32px;">Druck als Blankett</span>
<span class="t" style="left:794.0px;top:539px;font-size:16px;letter-spacing:-0.20px;">Druck mit Preisen</span>
<span class="t" style="left:794.0px;top:653px;font-size:16px;letter-spacing:-0.17px;">Langtext-LV ohne Kurztexte</span>
<span class="t" style="left:794.0px;top:698px;font-size:16px;letter-spacing:-0.17px;">Kurztext-LV ohne Langtexte</span>
<span class="t" style="left:794.0px;top:743px;font-size:16px;letter-spacing:-0.08px;">LV mit Kurz- und Langtexten</span>
<span class="t" style="left:1320.7px;top:478px;font-size:16px;letter-spacing:-0.48px;">Deckblatt ausgeben</span>
<span class="t" style="left:1320.7px;top:513px;font-size:16px;letter-spacing:-0.11px;">Firmenlogo drucken</span>
<span class="t" style="left:1320.7px;top:548px;font-size:16px;letter-spacing:-0.30px;">Inhaltsverzeichnis</span>
<span class="t" style="left:1320.7px;top:583px;font-size:16px;letter-spacing:-0.34px;">Zusammenstellung drucken</span>
<span class="t" style="left:1320.7px;top:618px;font-size:16px;letter-spacing:-0.12px;">Menge, Einheit, Preise .. unterhalb der Position</span>
<span class="t" style="left:1320.7px;top:653px;font-size:16px;letter-spacing:-0.48px;">Zeitansätze drucken</span>
<span class="t" style="left:1320.7px;top:688px;font-size:16px;letter-spacing:-0.25px;">Zuordnungen drucken</span>
<span class="t" style="left:1320.7px;top:723px;font-size:16px;letter-spacing:-0.09px;">Nur Positionen mit Textergänzungen drucken</span>
<span class="t" style="left:1320.7px;top:758px;font-size:16px;letter-spacing:-0.27px;color:#b9b9b9;">Nur markierte Zeilen drucken</span>
<span class="t" style="left:777.9px;top:973px;font-size:16px;letter-spacing:-0.20px;">Einmalig die PDF Unterschriften nicht ausgeben.</span>
<span class="t" style="left:1644.6px;top:973px;font-size:16px;">OK</span>
<span class="t" style="left:1778.9px;top:973px;font-size:16px;letter-spacing:-0.35px;">Abbrechen</span>

</div>
<div id="winb"><i></i></div>
</body>
</html>
